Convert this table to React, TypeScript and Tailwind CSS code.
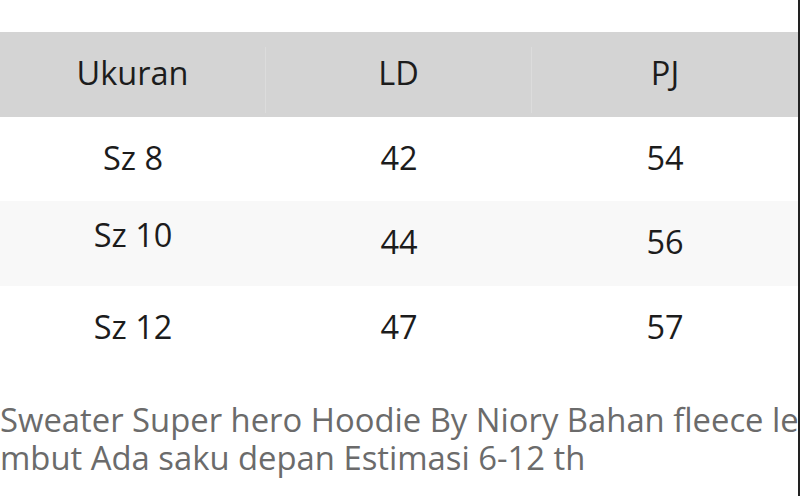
const rows = [
  { size: 'Sz 8', ld: '42', pj: '54', shade: false, lift: false },
  { size: 'Sz 10', ld: '44', pj: '56', shade: true, lift: true },
  { size: 'Sz 12', ld: '47', pj: '57', shade: false, lift: false },
]

export default function App() {
  return (
    <div
      className="h-[496px] w-[800px] overflow-hidden border-r-2 border-[#222] bg-white"
      style={{ fontFamily: '"Open Sans", "Noto Sans", sans-serif' }}
    >
      <div className="pt-[32px]">
        {/* size chart */}
        <div className="grid h-[85px] grid-cols-3 bg-[#d4d4d4] text-[32.5px] text-[#1c1c1c]">
          <HeadCell>Ukuran</HeadCell>
          <HeadCell>LD</HeadCell>
          <HeadCell last>PJ</HeadCell>
        </div>
        {rows.map((r, i) => (
          <div
            key={r.size}
            className={`grid grid-cols-3 text-[32.5px] text-[#1c1c1c] ${i === 0 ? 'h-[84px]' : 'h-[85px]'} ${r.shade ? 'bg-[#f8f8f8]' : 'bg-white'}`}
          >
            <div className={`flex items-center justify-center ${r.lift ? 'pb-[16px]' : 'pb-[2px]'}`}>{r.size}</div>
            <div className="flex items-center justify-center pb-[2px]">{r.ld}</div>
            <div className="flex items-center justify-center pb-[2px]">{r.pj}</div>
          </div>
        ))}
      </div>

      <p className="mt-[30px] whitespace-nowrap text-[32.8px] leading-[38px] text-[#6b6b6b]">
        Sweater Super hero Hoodie By Niory Bahan fleece le
        <br />
        mbut Ada saku depan Estimasi 6-12 th
      </p>
    </div>
  )
}

function HeadCell({ children, last }: { children: string; last?: boolean }) {
  return (
    <div className="flex items-center justify-center">
      <div className="flex h-full w-full items-center justify-center pb-[3px]">{children}</div>
      {!last && <div className="mt-[15px] mb-[4px] h-[66px] w-px shrink-0 bg-[#dcdcdc]" />}
    </div>
  )
}
